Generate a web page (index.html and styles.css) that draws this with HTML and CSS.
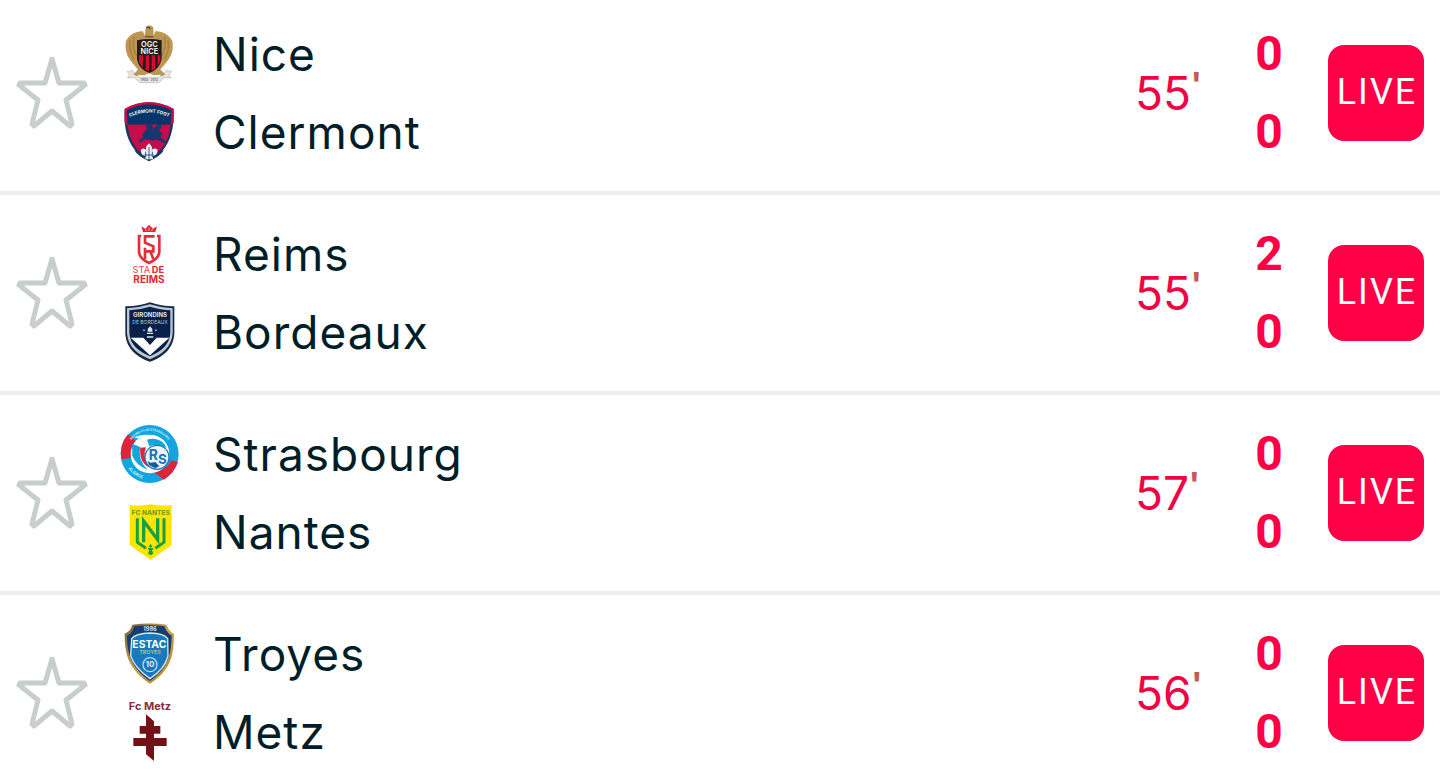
FILE: index.html
```
<!DOCTYPE html>
<html lang="en">
<head>
  <meta charset="UTF-8">
  <meta name="viewport" content="width=device-width, initial-scale=1">
  <title>Live scores</title>
  <link rel="stylesheet" href="styles.css">
</head>
<body>
  <!-- shared star outline -->
  <svg class="sprite" aria-hidden="true">
    <symbol id="star" viewBox="0 0 72 72">
      <path d="M36 2 L43 26 L68 26 L69 28 L50 43 L56 67 L54 69 L36 54 L18 69 L16 67 L22 43 L3 28 L4 26 L29 26 Z"/>
    </symbol>
  </svg>

  <ul class="match-list">
    <li class="match">
      <button class="favourite" type="button" aria-label="Follow Nice - Clermont">
        <svg class="star"><use href="#star"/></svg>
      </button>
      <div class="teams">
        <div class="team">
          <svg class="badge" viewBox="30 27 180 180" aria-hidden="true">
            <path d="M99 49 C82 47 57 58 48 79 C43 104 52 129 69 146 L83 163 L78 179 L102 181 L117 175 L132 181 L157 179 L151 163 L166 146 C183 129 192 104 187 79 C178 58 153 47 136 49 L131 62 L130 40 C129 28 108 29 107 40 L104 62 Z" fill="#bd9652"/>
            <path d="M61 75 Q55 103 72 134 M72 65 Q65 96 80 124 M174 75 Q180 103 163 134 M163 65 Q170 96 155 124" fill="none" stroke="#a8813f" stroke-width="4"/>
            <path d="M108 38 l8 -2 l5 6 M106 65 h24" fill="none" stroke="#65502e" stroke-width="4"/>
            <path d="M81 76 Q118 68 155 76 V132 Q150 162 118 174 Q86 162 81 132 Z" fill="#231b1d"/>
            <path d="M87 121 H99 V159 L87 142 Z M107 121 H117 V169 L107 164 Z M125 121 H135 V161 L125 167 Z M143 121 H151 V139 L143 153 Z" fill="#d60b29"/>
            <text class="crest-bold" x="118" y="95" font-size="22" fill="#f0e9dc">OGC</text>
            <text class="crest-bold" x="118" y="117" font-size="22" fill="#f0e9dc">NICE</text>
            <path d="M51 170 L67 166 L77 180 L90 187 H146 L159 180 L169 166 L185 170 L176 178 L183 188 L163 188 L146 203 H90 L73 188 L53 188 L60 178 Z" fill="#e8e5e0" stroke="#bbb7b0" stroke-width="2"/>
            <path d="M70 178 L88 161 L97 174 L80 184 M166 178 L148 161 L139 174 L156 184" fill="#b6975e"/>
            <text class="crest-bold" x="118" y="199" font-size="9" fill="#777">1904 - 2013</text>
          </svg>
          <span class="name">Nice</span>
        </div>
        <div class="team">
          <svg class="badge" viewBox="30 30 180 180" aria-hidden="true">
            <path d="M44 52 Q116 10 191 52 C193 114 180 175 117 208 C54 175 40 114 44 52 Z" fill="#173865"/>
            <path d="M44 50 Q116 10 191 50 V91 L184 99 H50 L44 91 Z" fill="#c70d49"/>
            <path d="M51 55 Q117 20 184 55 L182 98 H53 Z" fill="#05356a"/>
            <path d="M53 98 H182 C178 137 165 171 117 200 C69 171 58 137 53 98 Z" fill="#c70d49"/>
            <path id="clermont-arc" d="M55 77 Q117 46 181 77" fill="none"/>
            <text class="crest-bold" font-size="14" fill="#e9f4fc"><textPath href="#clermont-arc" startOffset="50%">CLERMONT FOOT</textPath></text>
            <path d="M106 100 L125 97 L130 108 L124 119 L137 103 L151 95 L155 105 L147 113 L157 125 L151 135 L168 148 L165 154 L141 143 L128 146 L105 142 L86 154 L88 144 L99 137 L96 127 L111 111 Z" fill="#17376e"/>
            <path d="M73 175 Q85 195 117 207 Q149 195 162 175 L139 180 H95 Z" fill="#173865"/>
            <path d="M117 154 Q132 168 123 177 C137 161 150 174 138 188 L129 192 V202 H106 V192 L97 188 C86 174 98 161 111 177 Q102 167 117 154 Z" fill="#eaf1f5"/>
            <path d="M117 165 V201 M103 189 H131 M107 179 V196 M127 179 V196" stroke="#345d83" stroke-width="3"/>
          </svg>
          <span class="name">Clermont</span>
        </div>
      </div>
      <div class="minute">55<span class="tick">'</span></div>
      <div class="scores"><span>0</span><span>0</span></div>
      <button class="live" type="button">LIVE</button>
    </li>

    <li class="match">
      <button class="favourite" type="button" aria-label="Follow Reims - Bordeaux">
        <svg class="star"><use href="#star"/></svg>
      </button>
      <div class="teams">
        <div class="team">
          <svg class="badge" viewBox="30 27 180 180" aria-hidden="true">
            <path d="M94 34 L106 41 L117 29 L129 41 L141 34 L136 51 H99 Z" fill="#df2930"/>
            <path d="M105 43 l5 4 M129 43 l-5 4 M117 38 v9" stroke="#fff" stroke-width="2"/>
            <path d="M94 63 H87 V110 Q88 131 117 144 Q147 131 148 110 V63 H141" fill="none" stroke="#e13239" stroke-width="8"/>
            <path d="M130 68 V64 H105 V83 L130 94 V109 H105 V98 M105 132 V99 M107 109 H121 L130 132 M130 94 V109" fill="none" stroke="#df3037" stroke-width="8"/>
            <text class="crest-text" x="94" y="175" font-size="28" fill="#e4464c">STA</text>
            <text class="crest-bold" x="144" y="175" font-size="28" fill="#df2930">DE</text>
            <text class="crest-bold" x="117" y="204" font-size="30" fill="#df2930">REIMS</text>
          </svg>
          <span class="name">Reims</span>
        </div>
        <div class="team">
          <svg class="badge" viewBox="30 30 180 180" aria-hidden="true">
            <path d="M46 43 Q82 44 120 31 Q158 44 193 43 V125 C190 172 157 196 120 209 C83 196 49 172 46 125 Z" fill="#142948"/>
            <path d="M51 49 Q85 48 120 37 Q155 48 188 49 V124 C185 166 155 188 120 202 C85 188 54 166 51 124 Z" fill="#bfc8d2"/>
            <path d="M58 55 Q87 54 120 44 Q153 54 181 55 V124 C178 161 151 180 120 193 C89 180 61 161 58 124 Z" fill="#09204a"/>
            <text class="crest-bold" x="120" y="75" font-size="18" fill="#dce3eb">GIRONDINS</text>
            <text class="crest-text" x="120" y="95" font-size="15" fill="#bac6d5">DE BORDEAUX</text>
            <path d="M62 137 H100 L120 159 L140 137 H178 L120 190 Z" fill="#fff"/>
            <path d="M120 103 L127 111 V119 H113 V111 Z M111 122 H129 V126 H111 Z M111 133 H130 V137 H111 Z" fill="#dfe6ec"/>
            <circle cx="102" cy="115" r="3" fill="#95a5bb"/>
            <circle cx="138" cy="115" r="3" fill="#95a5bb"/>
          </svg>
          <span class="name">Bordeaux</span>
        </div>
      </div>
      <div class="minute">55<span class="tick">'</span></div>
      <div class="scores"><span>2</span><span>0</span></div>
      <button class="live" type="button">LIVE</button>
    </li>

    <li class="match">
      <button class="favourite" type="button" aria-label="Follow Strasbourg - Nantes">
        <svg class="star"><use href="#star"/></svg>
      </button>
      <div class="teams">
        <div class="team">
          <svg class="badge" viewBox="30 27 180 180" aria-hidden="true">
            <circle cx="119" cy="117" r="87" fill="#12a5df"/>
            <path d="M54 58 L82 82 Q60 104 66 128 L34 133 Q26 90 54 58 Z" fill="#dc253a"/>
            <path d="M160 162 Q178 152 183 136 L204 141 Q192 176 162 194 L132 172 Z" fill="#dc253a"/>
            <circle cx="120" cy="117" r="58" fill="#fff"/>
            <path d="M73 68 C104 51 150 59 168 93 Q130 72 113 96 C103 74 88 69 73 68 Z" fill="#fff"/>
            <path d="M111 74 C137 66 163 78 169 99 Q142 84 118 94 Z M66 87 Q79 89 91 97 Q82 135 113 164 Q78 151 67 122 Z" fill="#12a5df"/>
            <path d="M91 98 L108 97 Q96 126 117 157 Q87 142 91 98 Z" fill="#dc253a"/>
            <circle cx="141" cy="127" r="38" fill="#1f75b9"/>
            <circle cx="141" cy="127" r="34" fill="#edf6fb"/>
            <path d="M112 137 L122 143 L136 141 L148 154 L136 160 L118 151 Z" fill="#155c9f"/>
            <text class="crest-bold" x="130" y="136" font-size="42" fill="#1873b7">R</text>
            <text class="crest-bold" x="157" y="146" font-size="40" fill="#1873b7">S</text>
            <path id="strasbourg-arc" d="M53 101 A68 68 0 0 1 186 101" fill="none"/>
            <text class="crest-bold" font-size="9" fill="#c6f1ff"><textPath href="#strasbourg-arc" startOffset="50%">RACING CLUB STRASBOURG</textPath></text>
            <path id="alsace-arc" d="M46 148 Q66 184 112 197" fill="none"/>
            <text class="crest-bold" font-size="13" fill="#c6f1ff"><textPath href="#alsace-arc" startOffset="50%">ALSACE</textPath></text>
          </svg>
          <span class="name">Strasbourg</span>
        </div>
        <div class="team">
          <svg class="badge" viewBox="30 30 180 180" aria-hidden="true">
            <path d="M59 39 Q91 43 122 37 Q153 43 185 39 V159 L122 204 L59 159 Z" fill="#fee400"/>
            <text class="crest-bold" x="122" y="70" font-size="20" fill="#649b20">FC NANTES</text>
            <path d="M82 79 V151 L108 169 M162 79 V151 L136 169" fill="none" stroke="#19a13e" stroke-width="9"/>
            <path d="M101 151 V87 L143 143 V79" fill="none" stroke="#19a13e" stroke-width="10"/>
            <path d="M122 155 L127 164 L123 166 L130 185 L122 190 L114 185 L121 166 L116 164 Z M114 168 H130 V173 H114 Z" fill="#19a13e"/>
          </svg>
          <span class="name">Nantes</span>
        </div>
      </div>
      <div class="minute">57<span class="tick">'</span></div>
      <div class="scores"><span>0</span><span>0</span></div>
      <button class="live" type="button">LIVE</button>
    </li>

    <li class="match">
      <button class="favourite" type="button" aria-label="Follow Troyes - Metz">
        <svg class="star"><use href="#star"/></svg>
      </button>
      <div class="teams">
        <div class="team">
          <svg class="badge" viewBox="30 27 180 180" aria-hidden="true">
            <defs>
              <linearGradient id="troyes-gold" x1="0" y1="0" x2="1" y2="1">
                <stop offset="0%" stop-color="#6e603a"/>
                <stop offset="50%" stop-color="#c9a64d"/>
                <stop offset="100%" stop-color="#a87e24"/>
              </linearGradient>
            </defs>
            <path d="M67 29 Q120 22 170 29 C174 42 183 53 192 56 C191 115 187 162 120 206 C54 163 44 115 44 56 C57 50 63 42 67 29 Z" fill="url(#troyes-gold)"/>
            <path d="M73 34 Q120 27 163 34 C168 48 177 58 185 62 C184 116 174 161 120 198 C65 161 51 116 51 62 C63 57 69 47 73 34 Z" fill="#193d6c"/>
            <path d="M65 71 Q77 55 120 54 Q163 55 173 71 L174 123 Q165 161 120 191 Q75 160 62 123 Z" fill="#1879bf" stroke="#d8e7ef" stroke-width="4"/>
            <text class="crest-bold" x="120" y="49" font-size="17" fill="#d1deea">1986</text>
            <text class="crest-bold" x="118" y="98" font-size="31" fill="#fff">ESTAC</text>
            <text class="crest-bold" x="120" y="118" font-size="16" fill="#b8b486">TROYES</text>
            <circle cx="120" cy="149" r="21" fill="none" stroke="#badbec" stroke-width="4"/>
            <text class="crest-bold" x="120" y="157" font-size="24" fill="#d9edf5">10</text>
          </svg>
          <span class="name">Troyes</span>
        </div>
        <div class="team">
          <svg class="badge" viewBox="30 36 180 180" aria-hidden="true">
            <text class="crest-bold" x="120" y="61" font-size="33" fill="#863039">Fc Metz</text>
            <path d="M108 73 L132 94 V108 H151 V131 H132 V144 H170 V168 H132 V213 L108 193 V168 H70 V144 H108 V131 H89 V108 H108 Z" fill="#741116"/>
          </svg>
          <span class="name">Metz</span>
        </div>
      </div>
      <div class="minute">56<span class="tick">'</span></div>
      <div class="scores"><span>0</span><span>0</span></div>
      <button class="live" type="button">LIVE</button>
    </li>
  </ul>
</body>
</html>
```

FILE: styles.css
```
* {
  margin: 0;
  padding: 0;
  box-sizing: border-box;
}

html {
  scrollbar-width: none;
}

body {
  background: #fff;
  color: #001e28;
  font-family: Inter, Roboto, sans-serif;
  font-size: 46px;
}

.sprite {
  display: none;
}

.match-list {
  list-style: none;
}

.match {
  display: flex;
  align-items: center;
  padding: 20px 16px 20px 0;
  border-bottom: 4px solid #eee;
}

.match:first-child {
  padding-top: 15px;
}

.match:last-child {
  padding-bottom: 0;
  border-bottom: none;
}

.favourite {
  width: 104px;
  height: 104px;
  display: flex;
  align-items: center;
  justify-content: center;
  border: none;
  background: none;
  cursor: pointer;
}

.star {
  width: 72px;
  height: 72px;
  fill: none;
  stroke: #c8cdcd;
  stroke-width: 5;
  stroke-linejoin: round;
  overflow: visible;
}

.teams {
  flex: 1;
  padding-left: 16px;
}

.team {
  height: 78px;
  display: flex;
  align-items: center;
  gap: 33px;
}

.badge {
  width: 60px;
  height: 60px;
  overflow: visible;
}

.name {
  letter-spacing: 1px;
}

.crest-text,
.crest-bold {
  text-anchor: middle;
}

.crest-bold {
  font-weight: 700;
}

.minute {
  width: 98px;
  display: flex;
  color: #f00544;
  line-height: 76px;
}

.tick {
  color: #c45a55;
  font-size: 30px;
  font-weight: 800;
  line-height: 56px;
}

.scores {
  width: 72px;
  display: flex;
  flex-direction: column;
  color: #ff0046;
  font-family: Roboto, sans-serif;
  font-size: 48px;
  font-weight: 700;
  line-height: 78px;
  text-align: center;
}

.live {
  width: 96px;
  height: 96px;
  margin-left: 23px;
  padding: 0 0 2px 2px;
  border: none;
  border-radius: 16px;
  background: #ff0046;
  color: #fff;
  font-family: Roboto, sans-serif;
  font-size: 36px;
  letter-spacing: 2px;
  cursor: pointer;
}
```
